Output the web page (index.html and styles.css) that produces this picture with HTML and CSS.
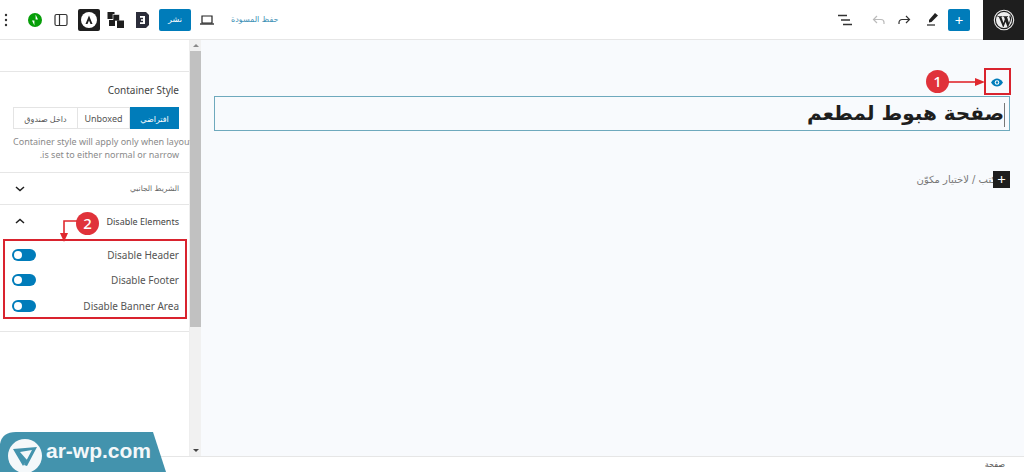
FILE: index.html
```html
<!DOCTYPE html>
<html lang="ar">
<head>
    <meta charset="UTF-8">
    <title>صفحة هبوط لمطعم</title>
    <link rel="stylesheet" href="styles.css">
</head>
<body>
    <header class="topbar" dir="ltr">
        <div class="tools">
            <svg class="icon-dots" width="4" height="14" viewBox="0 0 4 14"><circle cx="2" cy="2" r="1.2"/><circle cx="2" cy="7" r="1.2"/><circle cx="2" cy="12" r="1.2"/></svg>
            <svg class="icon-jet" width="16" height="16" viewBox="0 0 16 16"><circle cx="8" cy="8" r="7" fill="#069e08"/><path d="M8.6 2.6v5H11z M7.4 13.4v-5H5z" fill="#fff"/></svg>
            <svg class="icon-panel" width="14" height="14" viewBox="0 0 14 14"><rect x="1" y="1.5" width="12" height="11" rx="1.5" fill="none" stroke="#333" stroke-width="1.2"/><path d="M5.5 1.5v11" stroke="#333" stroke-width="1.2"/></svg>
            <span class="astra"><svg width="22" height="22" viewBox="0 0 22 22"><circle cx="11" cy="11" r="8" fill="#fff"/><path d="M11 6.5 7.5 15h2l1.5-3.6L12.5 15h2z" fill="#1e1e1e"/></svg></span>
            <svg class="icon-blocks" width="18" height="18" viewBox="0 0 18 18"><rect x="0.5" y="1" width="7" height="7" fill="#1e1e1e"/><rect x="6" y="3.5" width="6.500" height="6.500" fill="#1e1e1e" stroke="#fff" stroke-width=".6"/><rect x="2" y="9" width="6" height="6" fill="#1e1e1e"/><rect x="10" y="9.500" width="7" height="7.500" fill="#1e1e1e"/></svg>
            <svg class="icon-b" width="15" height="16" viewBox="0 0 15 16"><path d="M1 0h10l3 3v10l-3 3H1z" fill="#2b2d3a"/><path d="M5 4h5v8H5v-1.700h3V8.800H6V7.200h2V5.700H5z" fill="#fff"/></svg>
            <button class="btn-publish" type="button">نشر</button>
            <svg class="icon-laptop" width="14" height="12" viewBox="0 0 14 12"><path d="M2 2h10v7H2z" fill="none" stroke="#222" stroke-width="1.200"/><path d="M0 10h14" stroke="#222" stroke-width="1.300"/></svg>
            <span class="save-draft">حفظ المسودة</span>
        </div>
        <div class="tools-right">
            <svg class="icon-list" width="14" height="12" viewBox="0 0 14 12"><path d="M0 1.500h9M3 6h9M5 10.500h9" stroke="#333" stroke-width="1.300"/></svg>
            <svg class="icon-undo" width="13" height="10" viewBox="0 0 13 10"><path d="M5 1 1.500 4.500 5 8M1.500 4.500H9a3 3 0 0 1 3 3V9" fill="none" stroke="#bbb" stroke-width="1.200"/></svg>
            <svg class="icon-redo" width="13" height="10" viewBox="0 0 13 10"><path d="M8 1l3.500 3.500L8 8M11.500 4.500H4a3 3 0 0 0-3 3V9" fill="none" stroke="#333" stroke-width="1.200"/></svg>
            <svg class="icon-pen" width="11" height="13" viewBox="0 0 11 13"><path d="M8 0l3 2.500L4.500 9 2 9.500 2 7z" fill="#222"/><path d="M0 12h8" stroke="#222" stroke-width="1.200"/></svg>
            <button class="btn-add" type="button">+</button>
            <span class="wp-logo"><svg width="22" height="22" viewBox="0 0 22 22"><circle cx="11" cy="11" r="9.700" fill="none" stroke="#eee" stroke-width="1.100"/><circle cx="11" cy="11" r="8" fill="#eee"/><path d="M4.500 7.300h5l-.1.600-1 .1 2.100 6 1.300-3.700-.8-2.300-.8-.1v-.6h4.900l-.1.600-1 .1 2 6 .9-3c.5-1.800-.8-2.600-.5-3.800l.6-.9 1.200 2.500-.6 3.400-2.500 5.800h-.6l-2-5.300-1.900 5.300h-.6L5.900 8l-1.400-.1z" fill="#1e1e1e"/></svg></span>
        </div>
    </header>

    <main class="workspace">
        <aside class="sidebar">
            <div class="panel-top"></div>
            <section class="panel panel-style">
                <h3 class="panel-label">Container Style</h3>
                <div class="segments">
                    <span class="segment">داخل صندوق</span>
                    <span class="segment">Unboxed</span>
                    <span class="segment is-active">افتراضي</span>
                </div>
                <p class="panel-help">Container style will apply only when layout<br>.is set to either normal or narrow</p>
            </section>
            <section class="panel-row">
                <svg class="chevron" width="10" height="6" viewBox="0 0 10 6"><path d="M1 1l4 3.500L9 1" fill="none" stroke="#1e1e1e" stroke-width="1.500"/></svg>
                <span class="row-title arabic-small">الشريط الجانبي</span>
            </section>
            <section class="panel-open">
                <div class="panel-row no-border">
                    <svg class="chevron" width="10" height="6" viewBox="0 0 10 6"><path d="M1 5l4-3.500L9 5" fill="none" stroke="#1e1e1e" stroke-width="1.500"/></svg>
                    <span class="row-title">Disable Elements</span>
                </div>
                <div class="toggle-row"><span class="toggle"></span><span>Disable Header</span></div>
                <div class="toggle-row"><span class="toggle"></span><span>Disable Footer</span></div>
                <div class="toggle-row"><span class="toggle"></span><span>Disable Banner Area</span></div>
            </section>
        </aside>

        <div class="scrollbar">
            <span class="arrow-up"></span>
            <span class="thumb"></span>
            <span class="arrow-down"></span>
        </div>

        <div class="canvas">
            <div class="preview-line">
                <svg width="12" height="9" viewBox="0 0 12 9"><path d="M0 4.500C2 1.500 4 .5 6 .5s4 1 6 4c-2 3-4 4-6 4s-4-1-6-4z" fill="#007cba"/><circle cx="6" cy="4.500" r="2.300" fill="#fff"/><circle cx="6" cy="4.500" r="1.200" fill="#007cba"/></svg>
            </div>
            <h1 class="page-title" dir="rtl"><span class="caret"></span>صفحة هبوط لمطعم</h1>
            <div class="block-hint" dir="rtl">
                <span class="hint-text">اكتب / لاختيار مكوّن</span>
                <span class="hint-plus">+</span>
            </div>
        </div>
    </main>

    <footer class="statusbar">صفحة</footer>

    <!-- tutorial marks on top of the screenshot -->
    <div class="mark-box mark-box-eye"></div>
    <span class="mark-num mark-num-1">1</span>
    <svg class="mark-arrow mark-arrow-1" width="37" height="10" viewBox="0 0 37 10"><path d="M0 5h28" stroke="#e0282e" stroke-width="1.600"/><path d="M27 1l10 4-10 4z" fill="#e0282e"/></svg>
    <div class="mark-box mark-box-toggles"></div>
    <span class="mark-num mark-num-2">2</span>
    <svg class="mark-arrow mark-arrow-2" width="18" height="24" viewBox="0 0 18 24"><path d="M18 2H5v14" fill="none" stroke="#e0282e" stroke-width="1.600"/><path d="M1 14h8l-4 9z" fill="#e0282e"/></svg>

    <div class="site-badge">
        <svg class="site-badge-bg" width="166" height="40" viewBox="0 0 166 40"><path d="M0 12Q2 0 16 0H153L166 40H0z" fill="#4393ad"/></svg>
        <svg class="site-badge-logo" width="34" height="34" viewBox="0 0 34 34"><circle cx="17" cy="17" r="17" fill="#f4f8fa"/><path d="M5 10 15 27 19 21 12 13 24 11 16 26 19 27 29 8z" fill="#4393ad"/></svg>
        <span class="site-badge-text">ar-wp.com</span>
    </div>
</body>
</html>
```

FILE: styles.css
```css
* {
    margin: 0;
    padding: 0;
    box-sizing: border-box;
}
html, body {
    width: 1024px;
    height: 472px;
    overflow: hidden;
}
body {
    display: flex;
    flex-direction: column;
    position: relative;
    background: #fff;
    color: #444;
    font-family: "Noto Sans", "DejaVu Sans", sans-serif;
    font-size: 10px;
}

/* top bar */
.topbar {
    height: 40px;
    flex: none;
    display: flex;
    justify-content: space-between;
    align-items: center;
    background: #fff;
    border-bottom: 1px solid #e6e6e6;
}
.tools, .tools-right {
    display: flex;
    align-items: center;
}
.tools {
    padding-left: 4px;
}
.icon-dots {
    fill: #333;
}
.icon-jet {
    margin-left: 19px;
}
.icon-panel {
    margin-left: 11px;
}
.astra {
    width: 22px;
    height: 22px;
    margin-left: 10px;
    background: #1e1e1e;
    border-radius: 2px;
}
.astra svg, .wp-logo svg {
    display: block;
}
.icon-blocks {
    margin-left: 7px;
}
.icon-b {
    margin-left: 10px;
}
.btn-publish {
    width: 32px;
    height: 22px;
    margin-left: 9px;
    border: none;
    border-radius: 2px;
    background: #007cba;
    color: #fff;
    font-family: "DejaVu Sans", sans-serif;
    font-size: 8px;
}
.icon-laptop {
    margin-left: 9px;
}
.save-draft {
    margin-left: 17px;
    width: 50px;
    color: #3d8fb5;
    font-family: "DejaVu Sans", sans-serif;
    font-size: 8px;
    white-space: nowrap;
}
.icon-list {
    margin-right: 20px;
}
.icon-undo {
    margin-right: 13px;
}
.icon-redo {
    margin-right: 16px;
}
.icon-pen {
    margin-right: 10px;
}
.btn-add {
    width: 22px;
    height: 22px;
    margin-right: 13px;
    border: none;
    border-radius: 2px;
    background: #007cba;
    color: #fff;
    font-family: "Noto Sans", sans-serif;
    font-size: 15px;
    line-height: 20px;
}
.wp-logo {
    width: 41px;
    height: 40px;
    display: flex;
    align-items: center;
    justify-content: center;
    background: #1e1e1e;
}

/* main area */
.workspace {
    flex: 1;
    min-height: 0;
    display: flex;
}
.sidebar {
    width: 190px;
    flex: none;
    background: #fff;
    border-right: 1px solid #eee;
}
.panel-top {
    height: 32px;
    border-bottom: 1px solid #e6e6e6;
}
.panel-style {
    height: 101px;
    padding: 11px 10px 0 13px;
    border-bottom: 1px solid #e6e6e6;
}
.panel-label {
    font-size: 10px;
    font-weight: 400;
    line-height: 14px;
    color: #444;
    text-align: right;
}
.segments {
    display: flex;
    height: 22px;
    margin-top: 10px;
    border: 1px solid #e4e4e4;
    font-size: 9px;
}
.segment {
    display: flex;
    align-items: center;
    justify-content: center;
    width: 52px;
    border-right: 1px solid #e4e4e4;
    font-family: "Noto Sans", "DejaVu Sans", sans-serif;
    color: #555;
}
.segment:first-child {
    width: 64px;
    font-size: 8px;
}
.segment.is-active {
    flex: 1;
    border-right: none;
    margin: -1px -1px -1px 0;
    background: #007cba;
    color: #fff;
    font-size: 8px;
}
.panel-help {
    margin-top: 6px;
    font-size: 9px;
    line-height: 13px;
    color: #8a8a8a;
    text-align: right;
    white-space: nowrap;
}
.panel-row {
    height: 32px;
    display: flex;
    align-items: center;
    justify-content: space-between;
    padding: 0 10px 0 15px;
    border-bottom: 1px solid #e6e6e6;
}
.panel-row.no-border {
    border-bottom: none;
}
.row-title {
    color: #444;
    font-size: 9px;
}
.arabic-small {
    font-family: "DejaVu Sans", sans-serif;
    font-size: 7.500px;
    color: #666;
}
.panel-open {
    height: 127px;
    border-bottom: 1px solid #e6e6e6;
}
.toggle-row {
    height: 25.500px;
    display: flex;
    align-items: center;
    justify-content: space-between;
    flex-direction: row;
    padding: 0 10px 0 12px;
    color: #555;
}
.panel-open .panel-row + .toggle-row {
    margin-top: 5px;
}
.toggle {
    width: 24px;
    height: 12px;
    border-radius: 6px;
    background: #007cba;
    position: relative;
}
.toggle::after {
    content: "";
    position: absolute;
    left: 2px;
    top: 2px;
    width: 8px;
    height: 8px;
    border-radius: 50%;
    background: #fff;
}

/* scrollbar */
.scrollbar {
    width: 11px;
    flex: none;
    display: flex;
    flex-direction: column;
    align-items: center;
    background: #f1f1f1;
}
.arrow-up, .arrow-down {
    width: 0;
    height: 0;
    border-left: 3px solid transparent;
    border-right: 3px solid transparent;
}
.arrow-up {
    margin-top: 4px;
    border-bottom: 3px solid #8a8a8a;
}
.thumb {
    width: 100%;
    height: 276px;
    margin-top: 4px;
    background: #c1c1c1;
}
.arrow-down {
    margin-top: auto;
    margin-bottom: 4px;
    border-top: 3px solid #444;
}

/* editor canvas */
.canvas {
    flex: 1;
    min-width: 0;
    padding: 37px 14px 0 13px;
    background: #f8fafd;
}
.preview-line {
    display: flex;
    justify-content: flex-end;
    height: 19px;
    padding: 1px 7px 0 0;
}
.page-title {
    height: 35px;
    padding: 0 4px;
    border: 1px solid #6ea9bd;
    font-family: "DejaVu Sans", sans-serif;
    font-size: 20px;
    font-weight: 700;
    line-height: 33px;
    color: #1e1e1e;
    text-align: right;
}
.caret {
    display: inline-block;
    width: 1px;
    height: 24px;
    vertical-align: middle;
    background: #777;
}
.block-hint {
    display: flex;
    align-items: center;
    height: 17px;
    margin-top: 40px;
    color: #777;
    font-family: "DejaVu Sans", sans-serif;
    font-size: 10px;
}
.hint-text {
    white-space: nowrap;
}
.hint-plus {
    position: absolute;
    right: 14px;
    width: 17px;
    height: 17px;
    background: #1e1e1e;
    color: #fff;
    font-family: "Noto Sans", sans-serif;
    font-size: 15px;
    line-height: 16px;
    text-align: center;
}
.block-hint {
    padding-right: 11px;
}

/* status bar */
.statusbar {
    height: 16px;
    flex: none;
    padding-right: 19px;
    border-top: 1px solid #e6e6e6;
    background: #fff;
    color: #555;
    font-family: "DejaVu Sans", sans-serif;
    font-size: 8px;
    line-height: 15px;
    text-align: right;
}

/* tutorial marks */
.mark-box {
    position: absolute;
    border: 2.500px solid #d9232e;
}
.mark-box-eye {
    left: 984px;
    top: 68px;
    width: 27px;
    height: 27px;
}
.mark-box-toggles {
    left: 3px;
    top: 239px;
    width: 184px;
    height: 80px;
}
.mark-num {
    position: absolute;
    width: 23px;
    height: 23px;
    border-radius: 50%;
    background: #e0323a;
    color: #fff;
    font-family: "Noto Sans", sans-serif;
    font-size: 15px;
    font-weight: 500;
    line-height: 23px;
    text-align: center;
}
.mark-num-1 {
    left: 926px;
    top: 70px;
}
.mark-num-2 {
    left: 76px;
    top: 212px;
}
.mark-arrow {
    position: absolute;
}
.mark-arrow-1 {
    left: 948px;
    top: 77px;
}
.mark-arrow-2 {
    left: 59px;
    top: 219px;
}

/* site badge */
.site-badge {
    position: absolute;
    left: 0;
    top: 432px;
    width: 166px;
    height: 40px;
}
.site-badge-bg {
    display: block;
}
.site-badge-logo {
    position: absolute;
    left: 8px;
    top: 7px;
}
.site-badge-text {
    position: absolute;
    left: 46px;
    top: 4px;
    color: #f4f8fa;
    font-family: "Liberation Sans", sans-serif;
    font-size: 21px;
    font-weight: 700;
    line-height: 30px;
}
```
